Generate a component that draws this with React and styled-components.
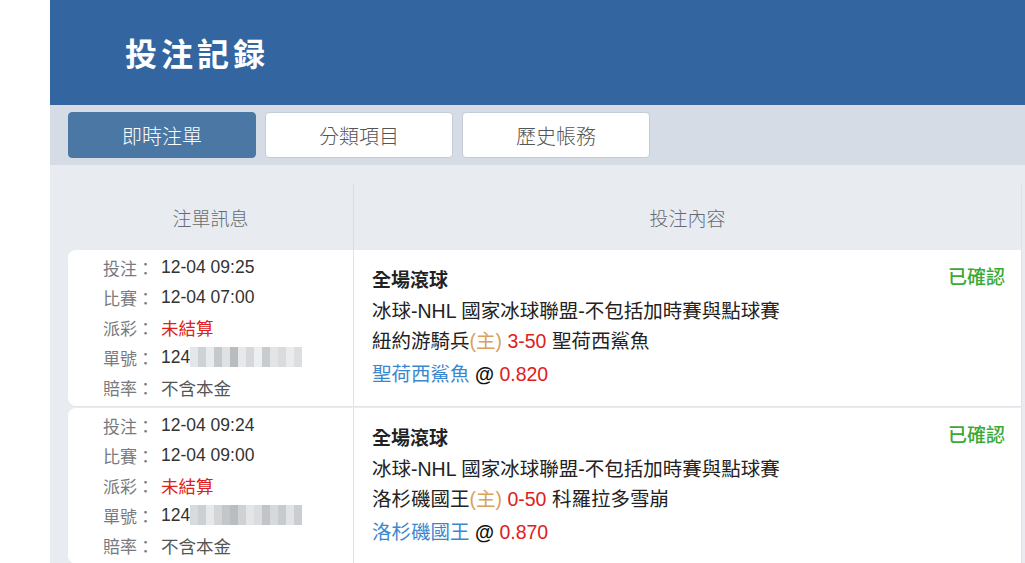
import styled, { createGlobalStyle } from "styled-components";

const GlobalStyle = createGlobalStyle`
  html, body {
    margin: 0;
    padding: 0;
    background: #ffffff;
    font-family: "Liberation Sans", "Noto Sans CJK TC", sans-serif;
    overflow: hidden;
  }
`;

const Page = styled.div`
  margin-left: 50px;
  min-height: 563px;
  background: #e8ecf1;
`;

const Header = styled.header`
  height: 105px;
  background: #3366a0;
  display: flex;
  align-items: center;
  padding-left: 75px;
  padding-bottom: 2px;
  box-sizing: border-box;
`;

const Title = styled.h1`
  margin: 0;
  color: #ffffff;
  font-family: "Liberation Serif", "Noto Sans CJK TC", serif;
  font-size: 32px;
  font-weight: 700;
  letter-spacing: 4px;
`;

const TabBar = styled.nav`
  height: 60px;
  background: #d5dce5;
  display: flex;
  align-items: center;
  gap: 9px;
  padding-left: 18px;
`;

const Tab = styled.button`
  width: 188px;
  height: 46px;
  border-radius: 4px;
  border: 1px solid ${(p) => (p.$active ? "#4a77a3" : "#c4ccd6")};
  background: ${(p) => (p.$active ? "#4a77a3" : "#ffffff")};
  color: ${(p) => (p.$active ? "#ffffff" : "#555555")};
  font-family: "Noto Sans CJK TC", sans-serif;
  font-size: 20px;
  font-weight: 300;
  cursor: pointer;
  padding: 0;
`;

const Table = styled.div`
  margin: 19px 3px 0 18px;
`;

const HeadRow = styled.div`
  display: grid;
  grid-template-columns: 285px 1fr;
  height: 66px;
  border-right: 1px solid #dde2e8;
`;

const HeadCell = styled.div`
  display: flex;
  align-items: center;
  justify-content: center;
  color: #666b70;
  font-family: "Noto Sans CJK TC", sans-serif;
  font-size: 19px;
  font-weight: 300;
  padding-top: 1px;
  & + & {
    border-left: 1px solid #d6dce3;
  }
`;

const Row = styled.div`
  display: grid;
  grid-template-columns: 285px 1fr;
  height: 156px;
  margin-bottom: 2px;
  background: #ffffff;
  border-radius: 8px 0 0 8px;
  border-right: 1px solid #dde2e8;
  box-shadow: 0 1px 0 #e2e6ea;
`;

const InfoCell = styled.div`
  padding: 2px 0 0 35px;
`;

const InfoLine = styled.div`
  display: flex;
  align-items: center;
  height: 30px;
  font-size: 17px;
`;

const Label = styled.span`
  width: 58px;
  color: #777b80;
  font-family: "Noto Sans CJK TC", sans-serif;
`;

const Value = styled.span`
  color: ${(p) => p.$color || "#333333"};
  font-size: 17.5px;
  font-family: "Liberation Sans", "Noto Sans CJK TC", sans-serif;
`;

const Blur = styled.span`
  display: inline-flex;
  height: 20px;
`;

const Pixel = styled.span`
  width: 8px;
  height: 20px;
`;

const DetailCell = styled.div`
  position: relative;
  border-left: 1px solid #e0e4e8;
  padding: 16px 18px 0 18px;
  color: #222222;
  font-size: 19.5px;
`;

const Line = styled.div`
  height: 30px;
  line-height: 30px;
  white-space: nowrap;
  font-weight: ${(p) => (p.$bold ? 700 : 400)};
  font-size: ${(p) => (p.$bold ? 19 : 19.5)}px;
  font-family: "Liberation Sans", "Noto Sans CJK TC", sans-serif;
  margin-top: ${(p) => p.$gap || 0}px;
`;

const Home = styled.span`
  color: #d9a25c;
`;

const Red = styled.span`
  color: #e0201b;
`;

const Blue = styled.span`
  color: #3b87cf;
`;

const At = styled.span`
  color: #111111;
  font-weight: 700;
`;

const Status = styled.span`
  position: absolute;
  top: 12px;
  right: 16px;
  color: #3aaa35;
  font-family: "Noto Sans CJK TC", sans-serif;
  font-size: 19px;
  font-weight: 500;
`;

const shades = [
  ["#e4e6e8", "#cfd2d5", "#e8eaec", "#c6c9cc", "#dfe1e3", "#b9bcbf", "#e6e8ea", "#d5d7da", "#eceef0", "#c9ccce", "#e2e4e6", "#d9dbdd", "#e9ebed", "#dcdee0"],
  ["#d8dbde", "#cdd0d3", "#e6e8ea", "#d3d6d9", "#c4c7ca", "#b9bcc0", "#cfd2d5", "#e3e5e7", "#dadcdf", "#c2c5c8", "#d6d9dc", "#c8cbce", "#e0e2e5", "#cbced1"],
];

const bets = [
  {
    placed: "12-04 09:25",
    match: "12-04 07:00",
    home: "紐約游騎兵",
    score: "3-50",
    away: "聖荷西鯊魚",
    pick: "聖荷西鯊魚",
    odds: "0.820",
  },
  {
    placed: "12-04 09:24",
    match: "12-04 09:00",
    home: "洛杉磯國王",
    score: "0-50",
    away: "科羅拉多雪崩",
    pick: "洛杉磯國王",
    odds: "0.870",
  },
];

const BetRow = ({ bet, index }) => (
  <Row>
    <InfoCell>
      <InfoLine>
        <Label>投注：</Label>
        <Value>{bet.placed}</Value>
      </InfoLine>
      <InfoLine>
        <Label>比賽：</Label>
        <Value>{bet.match}</Value>
      </InfoLine>
      <InfoLine>
        <Label>派彩：</Label>
        <Value $color="#e0201b">未結算</Value>
      </InfoLine>
      <InfoLine>
        <Label>單號：</Label>
        <Value>124</Value>
        <Blur>
          {shades[index].map((c, i) => (
            <Pixel key={i} style={{ background: c }} />
          ))}
        </Blur>
      </InfoLine>
      <InfoLine>
        <Label>賠率：</Label>
        <Value $color="#555555">不含本金</Value>
      </InfoLine>
    </InfoCell>
    <DetailCell>
      <Status>已確認</Status>
      <Line $bold>全場滾球</Line>
      <Line>冰球-NHL 國家冰球聯盟-不包括加時賽與點球賽</Line>
      <Line>
        {bet.home}
        <Home>(主)</Home> <Red>{bet.score}</Red> {bet.away}
      </Line>
      <Line $gap={3}>
        <Blue>{bet.pick}</Blue> <At>@</At> <Red>{bet.odds}</Red>
      </Line>
    </DetailCell>
  </Row>
);

export default function App() {
  return (
    <>
      <GlobalStyle />
      <Page>
        <Header>
          <Title>投注記録</Title>
        </Header>
        <TabBar>
          <Tab $active>即時注單</Tab>
          <Tab>分類項目</Tab>
          <Tab>歷史帳務</Tab>
        </TabBar>
        <Table>
          <HeadRow>
            <HeadCell>注單訊息</HeadCell>
            <HeadCell>投注內容</HeadCell>
          </HeadRow>
          {bets.map((bet, i) => (
            <BetRow key={i} bet={bet} index={i} />
          ))}
        </Table>
      </Page>
    </>
  );
}
